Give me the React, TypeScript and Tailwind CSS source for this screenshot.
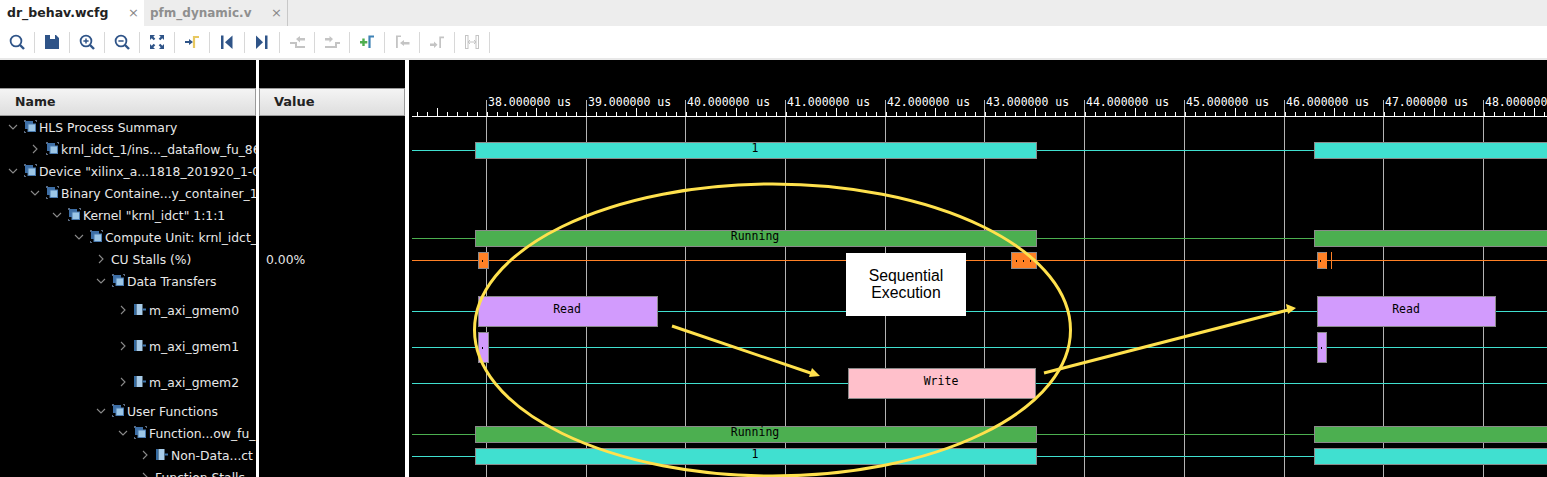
import React from 'react';

const MONO = '"DejaVu Sans Mono", monospace';
const NAVY = '#2f5488';
const OFF = '#c4c4c4';

const Group = () => (
  <svg width="13" height="13" viewBox="0 0 13 13" className="shrink-0">
    <path d="M.5 0v2M0 .5h2M11 .5h2M12.5 0v2M.5 11v2M0 12.5h2" stroke="#5a687c" />
    <rect x="1.5" y="1.5" width="7" height="7" fill="#3d6ea5" stroke="#3d6ea5" />
    <rect x="4" y="4" width="7.5" height="7.5" fill="#9cc6e6" stroke="#4a7bb0" />
  </svg>
);

const Bus = () => (
  <svg width="13" height="13" viewBox="0 0 13 13" className="shrink-0">
    <rect x="0" y="1" width="2.5" height="11" fill="#356a9f" />
    <rect x="2.5" y="1" width="6" height="11" fill="#a9cdea" />
    <rect x="8.5" y="5.5" width="3.5" height="2" fill="#3f76ad" />
  </svg>
);

const Chevron = ({ open }: { open: boolean }) => (
  <svg width="10" height="10" viewBox="0 0 10 10" className="shrink-0">
    <path d={open ? 'M1 3l4 4 4-4' : 'M3 1l4 4-4 4'} fill="none" stroke="#8a8a8a" strokeWidth="1.1" />
  </svg>
);

type Row = { label: string; chevron: number; icon?: 'group' | 'bus'; tall?: boolean; open?: boolean };

const rows: Row[] = [
  { label: 'HLS Process Summary', chevron: 8, icon: 'group', open: true },
  { label: 'krnl_idct_1/ins..._dataflow_fu_86', chevron: 30, icon: 'group' },
  { label: 'Device "xilinx_a...1818_201920_1-0', chevron: 8, icon: 'group', open: true },
  { label: 'Binary Containe...y_container_1', chevron: 30, icon: 'group', open: true },
  { label: 'Kernel "krnl_idct" 1:1:1', chevron: 52, icon: 'group', open: true },
  { label: 'Compute Unit: krnl_idct_', chevron: 74, icon: 'group', open: true },
  { label: 'CU Stalls (%)', chevron: 96 },
  { label: 'Data Transfers', chevron: 96, icon: 'group', open: true },
  { label: 'm_axi_gmem0', chevron: 118, icon: 'bus', tall: true },
  { label: 'm_axi_gmem1', chevron: 118, icon: 'bus', tall: true },
  { label: 'm_axi_gmem2', chevron: 118, icon: 'bus', tall: true },
  { label: 'User Functions', chevron: 96, icon: 'group', open: true },
  { label: 'Function...ow_fu_', chevron: 118, icon: 'group', open: true },
  { label: 'Non-Data...ct', chevron: 140, icon: 'bus' },
  { label: 'Function Stalls', chevron: 140 },
];

const Lens = ({ sign }: { sign?: '+' | '-' }) => (
  <>
    <circle cx="9" cy="9" r="5.4" fill="none" stroke={NAVY} strokeWidth="1.8" />
    <path d="M13 13l4 4" stroke={NAVY} strokeWidth="2.4" />
    {sign && <path d="M6.4 9h5.2" stroke={NAVY} strokeWidth="1.5" />}
    {sign === '+' && <path d="M9 6.4v5.2" stroke={NAVY} strokeWidth="1.5" />}
  </>
);

const tools: React.ReactNode[] = [
  <Lens key="a" />,
  <path key="b" fillRule="evenodd" d="M3 3h11l3 3v11H3zM8 3v4h5V3z" fill={NAVY} />,
  <Lens key="c" sign="+" />,
  <Lens key="d" sign="-" />,
  <path key="e" d="M3 3h5L6.3 4.7l2 2-1.6 1.6-2-2L3 8zM17 3v5l-1.7-1.7-2 2-1.6-1.6 2-2L12 3zM3 17v-5l1.7 1.7 2-2 1.6 1.6-2 2L8 17zM17 17h-5l1.7-1.7-2-2 1.6-1.6 2 2L17 12z" fill={NAVY} />,
  <g key="f">
    <path d="M3 9h4V7l4 3-4 3v-2H3z" fill={NAVY} />
    <path d="M12 16V5h5" fill="none" stroke="#e8c860" strokeWidth="2.2" />
  </g>,
  <g key="g" fill={NAVY}>
    <rect x="4" y="3.5" width="2.5" height="13.5" />
    <path d="M15.5 3.5v13.5L8 10.2z" />
  </g>,
  <g key="h" fill={NAVY}>
    <rect x="13" y="3.5" width="2.5" height="13.5" />
    <path d="M4 3.5v13.5l7-6.8z" />
  </g>,
  <g key="i">
    <path d="M9 7l4-3v2h5v2.5h-5v2z" fill={OFF} />
    <path d="M3 11h6v4h9" fill="none" stroke={OFF} strokeWidth="2" />
  </g>,
  <g key="j">
    <path d="M11 7L7.5 4v2H3v2.5h4.5v2z" fill={OFF} />
    <path d="M3 15h11v-4h4" fill="none" stroke={OFF} strokeWidth="2" />
  </g>,
  <g key="k">
    <path d="M5.3 6.5h2.4v2.6h2.6v2.4H7.7v2.6H5.3v-2.6H3V9.1h2.3z" fill="#4fae4f" />
    <path d="M12.5 16V4.5H17" fill="none" stroke="#3f82b5" strokeWidth="2.2" />
  </g>,
  <g key="l" fill={OFF}>
    <path d="M4 16V3.5h5v1.6H5.8V16z" />
    <path d="M8 11l4-3v2h5.5v2.5H12v1.5z" />
  </g>,
  <g key="m" fill={OFF}>
    <path d="M3 11.5h4v-2l3.5 3.2L7 16v-2H3z" />
    <path d="M12.3 16V4.6H17v1.6h-3V16z" />
  </g>,
  <g key="n" fill="none" stroke={OFF}>
    <rect x="3.5" y="3.5" width="2.5" height="13" />
    <rect x="14" y="3.5" width="2.5" height="13" />
    <path d="M6 10h8M8 8l-2 2 2 2M12 8l2 2-2 2" />
  </g>,
];

const majors = [486.5, 586.5, 685.5, 785.5, 885.5, 984.5, 1084.5, 1184.5, 1284.5, 1383.5, 1483.5];
const times = [38, 39, 40, 41, 42, 43, 44, 45, 46, 47, 48];
const minors = Array.from({ length: 115 }, (_, i) => 416.75 + i * 9.975);

type Bar = { x: number; y: number; w: number; h: number; fill: string; label?: string; lx?: number };

const TEAL = '#40e0d0';
const GREEN = '#4caf50';
const ORANGE = '#ff8126';
const PURPLE = '#d29bfd';
const PINK = '#ffc0cb';
const YELLOW = '#ffe14d';

const traces = [
  { y: 150, color: TEAL },
  { y: 238, color: GREEN },
  { y: 260, color: ORANGE },
  { y: 311, color: TEAL },
  { y: 347, color: TEAL },
  { y: 383, color: TEAL },
  { y: 434, color: GREEN },
  { y: 456, color: TEAL },
];

const bars: Bar[] = [
  { x: 475, y: 142, w: 562, h: 17, fill: TEAL, label: '1', lx: 755 },
  { x: 1314, y: 142, w: 240, h: 17, fill: TEAL },
  { x: 475, y: 230, w: 562, h: 17, fill: GREEN, label: 'Running', lx: 755 },
  { x: 1314, y: 230, w: 240, h: 17, fill: GREEN },
  { x: 478, y: 252, w: 11, h: 17, fill: ORANGE },
  { x: 1011, y: 252, w: 26, h: 17, fill: ORANGE },
  { x: 1317, y: 252, w: 10, h: 17, fill: ORANGE },
  { x: 478, y: 296, w: 180, h: 31, fill: PURPLE, label: 'Read', lx: 567 },
  { x: 1317, y: 296, w: 179, h: 31, fill: PURPLE, label: 'Read', lx: 1406 },
  { x: 478, y: 332, w: 11, h: 31, fill: PURPLE },
  { x: 1317, y: 332, w: 10, h: 31, fill: PURPLE },
  { x: 848, y: 368, w: 188, h: 31, fill: PINK, label: 'Write', lx: 941 },
  { x: 475, y: 426, w: 562, h: 17, fill: GREEN, label: 'Running', lx: 755 },
  { x: 1314, y: 426, w: 240, h: 17, fill: GREEN },
  { x: 475, y: 448, w: 562, h: 17, fill: TEAL, label: '1', lx: 755 },
  { x: 1314, y: 448, w: 240, h: 17, fill: TEAL },
];

const dots = [
  [482, 260],
  [1016, 260],
  [1023, 260],
  [1030, 260],
  [1320, 260],
  [482, 347],
  [1321, 347],
];

const Waveform = () => (
  <svg width="1138" height="417" viewBox="409 60 1138 417" className="block">
    <g shapeRendering="crispEdges">
      {majors.map((x) => (
        <line key={x} x1={x} x2={x} y1={100} y2={477} stroke="#b4b4b4" />
      ))}
      <line x1={412} x2={1547} y1={116.5} y2={116.5} stroke="#ffffff" />
      {minors.map((x, i) => (
        <line key={i} x1={Math.round(x) + 0.5} x2={Math.round(x) + 0.5} y1={i % 10 === 2 ? 108 : 112} y2={116} stroke="#ffffff" />
      ))}
      {traces.map((t) => (
        <line key={t.y} x1={412} x2={1547} y1={t.y + 0.5} y2={t.y + 0.5} stroke={t.color} />
      ))}
      {bars.map((b, i) => (
        <rect key={i} x={b.x + 0.5} y={b.y + 0.5} width={b.w - 1} height={b.h - 1} fill={b.fill} stroke="#8a8a8a" />
      ))}
      <line x1={1326.5} x2={1326.5} y1={252} y2={269} stroke={ORANGE} />
      <line x1={1331.5} x2={1331.5} y1={252} y2={269} stroke={ORANGE} />
      {dots.map(([x, y]) => (
        <rect key={x + '-' + y} x={x} y={y} width={1} height={2} fill="#000000" />
      ))}
    </g>
    {times.map((t, i) => (
      <text key={t} x={majors[i] + 1.5} y={106} fontFamily={MONO} fontSize="11.5" fill="#ffffff">
        {t}.000000 us
      </text>
    ))}
    {bars
      .filter((b) => b.label)
      .map((b, i) => (
        <text key={i} x={b.lx} y={b.y + (b.h > 20 ? 17 : 10)} textAnchor="middle" fontFamily={MONO} fontSize="11.5" fill="#000000">
          {b.label}
        </text>
      ))}
    <g fill="none" stroke={YELLOW} strokeWidth="3">
      <ellipse cx="772.5" cy="330" rx="298" ry="146" />
      <path d="M672 326L812 373.5" />
      <path d="M1044 373L1288 310" />
    </g>
    <path d="M820 376L809 377L812 368Z" fill={YELLOW} />
    <path d="M1296 308L1286 304L1288 314Z" fill={YELLOW} />
  </svg>
);

export default function App() {
  return (
    <div className="flex h-[477px] w-[1547px] flex-col overflow-hidden bg-black font-['DejaVu_Sans',sans-serif]">
      <div className="flex h-[26px] shrink-0 bg-[#ededed]">
        <div className="flex w-[144px] items-center justify-between bg-white pl-[7px] pr-[5px]">
          <span className="text-[12.5px] font-bold text-[#222222]">dr_behav.wcfg</span>
          <span className="text-[13px] text-[#888888]">×</span>
        </div>
        <div className="flex w-[144px] items-center justify-between border-r border-[#c8c8c8] pl-[6px] pr-[5px]">
          <span className="text-[12px] font-bold text-[#8f8f8f]">pfm_dynamic.v</span>
          <span className="text-[13px] text-[#888888]">×</span>
        </div>
      </div>
      <div className="flex h-[32px] shrink-0 items-center bg-white">
        {tools.map((t, i) => (
          <React.Fragment key={i}>
            <div className="flex h-[32px] w-[34px] shrink-0 items-center justify-center">
              <svg width="20" height="20" viewBox="0 0 20 20">
                {t}
              </svg>
            </div>
            <div className="h-[21px] w-px shrink-0 bg-[#d8d8d8]" />
          </React.Fragment>
        ))}
      </div>
      <div className="h-[2px] shrink-0 bg-[#e8e8e8]" />
      <div className="flex min-h-0 flex-1 bg-white">
        <div className="flex w-[256px] shrink-0 flex-col bg-black pt-[28px]">
          <div className="flex h-[28px] shrink-0 items-center border border-l-0 border-[#9a9a9a] bg-gradient-to-b from-[#f4f4f4] to-[#dedede] pl-[15px] text-[12.5px] font-bold text-[#222222]">
            Name
          </div>
          {rows.map((r) => (
            <div key={r.label} className={`flex shrink-0 items-center overflow-hidden whitespace-nowrap text-[12.35px] text-[#e8e8e8] ${r.tall ? 'h-[36px]' : 'h-[22px]'}`}>
              <div className="shrink-0" style={{ width: r.chevron }} />
              <Chevron open={!!r.open} />
              <div className={`flex items-center gap-[2px] ${r.icon ? 'ml-[6px]' : 'ml-[5px]'}`}>
                {r.icon === 'group' && <Group />}
                {r.icon === 'bus' && <Bus />}
                <span className="pt-[2px]">{r.label}</span>
              </div>
            </div>
          ))}
        </div>
        <div className="ml-[3px] flex w-[146px] shrink-0 flex-col bg-black pt-[28px]">
          <div className="flex h-[28px] shrink-0 items-center border border-[#9a9a9a] bg-gradient-to-b from-[#f4f4f4] to-[#dedede] pl-[14px] text-[13px] font-bold text-[#222222]">
            Value
          </div>
          <div className="h-[132px] shrink-0" />
          <div className="flex h-[22px] items-center pl-[7px] pt-[2px] text-[12.35px] text-[#e8e8e8]">0.00%</div>
        </div>
        <div className="relative ml-[4px] min-w-0 flex-1 bg-black">
          <Waveform />
          <div className="absolute left-[437px] top-[193px] flex h-[63px] w-[120px] items-center justify-center bg-white pb-[2px] text-center font-['Liberation_Sans',sans-serif] text-[15.8px] leading-[17px] text-black">
            Sequential
            <br />
            Execution
          </div>
        </div>
      </div>
    </div>
  );
}
